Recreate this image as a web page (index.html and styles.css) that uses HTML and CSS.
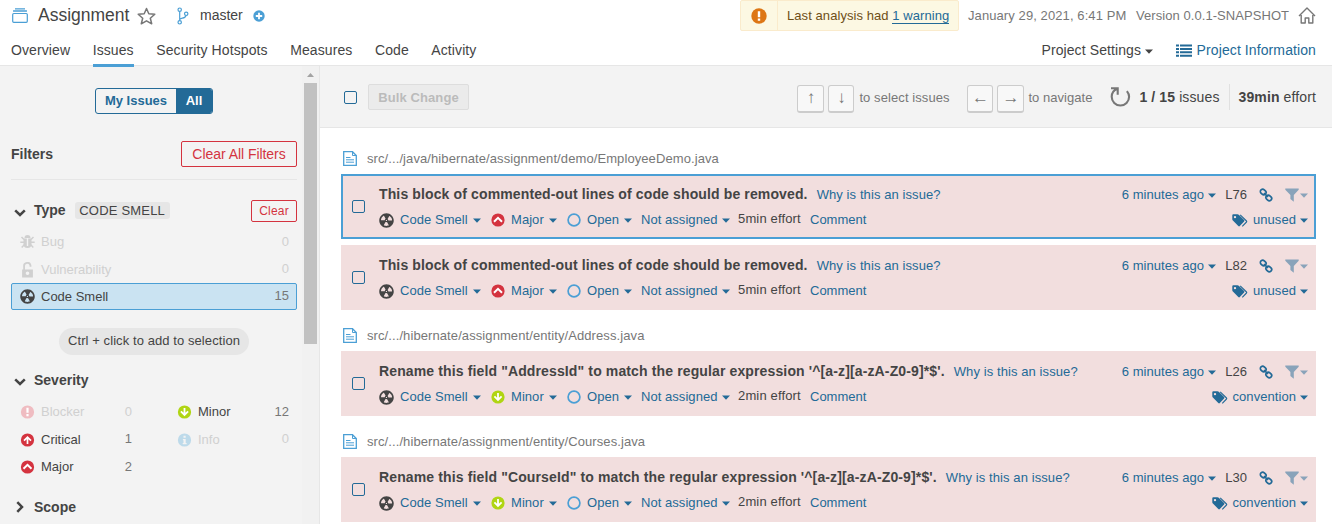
FILE: index.html
```html
<!DOCTYPE html>
<html lang="en">
<head>
<meta charset="utf-8">
<title>Issues - Assignment</title>
<link rel="stylesheet" href="styles.css">
</head>
<body>
<svg class="defs" width="0" height="0">
  <symbol id="smell" viewBox="1.8 1.8 12.4 12.4"><path d="M8 2C4.7 2 2 4.7 2 8s2.7 6 6 6 6-2.7 6-6-2.7-6-6-6zm-.5 5.5h.9v.9h-.9v-.9zm-3.8.2c-.1 0-.2-.1-.2-.2 0-.4.1-1.2.6-2S5.3 4.200 5.600 4c.2 0 .3 0 .3.1l1.300 2.300c0 .1 0 .2-.1.2-.1.2-.2.3-.3.5-.1.2-.2.4-.2.5 0 .1-.1.2-.2.2l-2.700-.1zM9.900 12c-.3.2-1.100.5-2 .5-.9 0-1.700-.3-2-.5-.1 0-.1-.2-.1-.3l1.300-2.300c0-.1.1-.1.2-.1.2.1.3.1.5.1s.4 0 .5-.1c.1 0 .2 0 .2.1l1.300 2.300c.2.2.2.3.1.3zm2.500-4.100L9.700 8c-.1 0-.2-.1-.2-.2 0-.2-.1-.4-.2-.5 0-.1-.2-.3-.3-.4-.1 0-.1-.1-.1-.2l1.300-2.300c.1-.1.2-.1.3-.1.3.2 1 .7 1.500 1.500s.6 1.600.6 2c0 0-.1.1-.2.1z"/></symbol>
  <symbol id="bug" viewBox="0 0 15 15"><path fill="currentColor" d="M4.500 4a3 3 0 0 1 6 0zM3.500 4.500h3.300V12h1.400V4.500h3.300v5.500a4 4 0 0 1-8 0z"/><path fill="none" stroke="currentColor" stroke-width="1.500" d="M4 5.500 1.500 3M11 5.500 13.500 3M4 8.300H.3M11 8.300h3.700M4.500 10.500l-2.800 3M10.500 10.500l2.800 3"/></symbol>
  <symbol id="lock" viewBox="0 0 12 16"><path fill="none" stroke="currentColor" stroke-width="1.800" d="M2.600 8V4.500a3.200 3.200 0 0 1 6.400-.8v1"/><path fill="currentColor" fill-rule="evenodd" d="M.6 7.500h10.800v8H.6zM6 9.500a1.800 1.800 0 1 0 0 3.600 1.800 1.800 0 0 0 0-3.600z"/></symbol>
  <symbol id="blocker" viewBox="0 0 14 14"><circle cx="7" cy="7" r="6.600" fill="currentColor"/><path stroke="#fff" stroke-width="2.200" d="M7 2.800v4.900M7 9v2.200"/></symbol>
  <symbol id="critical" viewBox="0 0 14 14"><circle cx="7" cy="7" r="6.600" fill="#d4333f"/><path fill="none" stroke="#fff" stroke-width="1.700" d="M7 11V4M3.500 7.600 7 4.100l3.500 3.500"/></symbol>
  <symbol id="major" viewBox="0 0 14 14"><circle cx="7" cy="7" r="6.600" fill="#d4333f"/><path fill="none" stroke="#fff" stroke-width="2" d="M3 8.800 7 4.900l4 3.900"/></symbol>
  <symbol id="minor" viewBox="0 0 14 14"><circle cx="7" cy="7" r="6.600" fill="#b0d513"/><path fill="none" stroke="#fff" stroke-width="1.800" d="M7 3v7M3.400 6.400 7 10l3.600-3.600"/></symbol>
  <symbol id="info" viewBox="0 0 14 14"><circle cx="7" cy="7" r="6.600" fill="currentColor"/><path fill="#f3f3f3" d="M6 2.800h2.200v2H6zM5.400 6h2.800v4h.9v1.300H5.200V10H6V7.200h-.6z"/></symbol>
  <symbol id="open" viewBox="0 0 14 14"><circle cx="7" cy="7" r="5.900" fill="none" stroke="#4b9fd5" stroke-width="1.700"/></symbol>
  <symbol id="caret" viewBox="0 0 8 5"><path fill="currentColor" d="M0 .5h8L4 4.700z"/></symbol>
  <symbol id="chevron" viewBox="0 0 12 8"><path fill="none" stroke="#444" stroke-width="2.500" d="M1.200 1.300 6 6l4.800-4.700"/></symbol>
  <symbol id="file" viewBox="0 0 14 15"><path fill="#fff" stroke="#4b9fd5" stroke-width="1.300" d="M.7.7h8.800l3.800 3.800v9.800H.7z"/><path fill="none" stroke="#4b9fd5" d="M9.500.7v3.800h3.800M3 6.500h4.500M3 8.800h8M3 11.200h8"/></symbol>
  <symbol id="link" viewBox="0 0 14 14"><g fill="none" stroke="currentColor" stroke-width="1.700"><rect x="1.200" y="1.700" width="6" height="4.600" rx="2.200" transform="rotate(45 4.200 4)"/><rect x="6.800" y="7.700" width="6" height="4.600" rx="2.200" transform="rotate(45 9.800 10)"/><path d="M5 5l4 4"/></g></symbol>
  <symbol id="filter" viewBox="0 0 14 14"><path fill="currentColor" d="M.3.500h13.400v1.200L8.800 7v6.700L5.400 11V7L.3 1.700z"/></symbol>
  <symbol id="tags" viewBox="0 0 16 13"><path fill="currentColor" fill-rule="evenodd" d="M.3 1.300a1 1 0 0 1 1-1h4.200c.6 0 1 .2 1.500.6l5.100 5.100c.5.5.5 1 0 1.500l-4.300 4.500c-.4.500-1 .5-1.500 0L.9 6.600C.5 6.200.3 5.700.3 5.200zM3 1.900a1.200 1.200 0 1 0 0 2.400 1.200 1.200 0 0 0 0-2.400z"/><path fill="none" stroke="currentColor" stroke-width="1.100" d="M8.200.8 14.500 7q.5.5 0 1l-4.200 4.400"/></symbol>
</svg>

<header class="header">
  <div class="header-top">
    <svg class="project-icon" width="16" height="15" viewBox="0 0 16 15"><g fill="none" stroke="#4b9fd5"><path d="M3 .8h10M1.700 3.800V3h12.600v.8" stroke-width="1.300"/><rect x=".7" y="5.500" width="14.600" height="8.800" rx="1" stroke-width="1.200"/></g></svg>
    <span class="project">Assignment</span>
    <svg class="star" width="19" height="18" viewBox="0 0 19 18"><path fill="none" stroke="#777" stroke-width="1.500" stroke-linejoin="round" d="M9.500 1.500l2.300 5.300 6 .5-4.500 3.900 1.400 5.600-5.200-3-5.200 3 1.400-5.600L1.200 7.300l6-.5z"/></svg>
    <svg class="branch" width="12" height="18" viewBox="0 0 12 18"><g fill="none" stroke="#4b9fd5" stroke-width="1.200"><circle cx="2.700" cy="2.700" r="1.700"/><circle cx="2.700" cy="15.300" r="1.700"/><circle cx="9.200" cy="6.800" r="1.700"/><path d="M2.700 4.400v9.200M2.700 12.500c1-2 5.500-.5 6.300-4"/></g></svg>
    <span class="branch-name">master</span>
    <svg class="plus" width="12" height="12" viewBox="0 0 12 12"><circle cx="6" cy="6" r="5.700" fill="#4b9fd5"/><path stroke="#fff" stroke-width="1.800" d="M6 2.800v6.400M2.800 6h6.400"/></svg>
    <div class="warning">
      <div class="warning-icon"><svg width="16" height="16" viewBox="0 0 16 16"><circle cx="8" cy="8" r="7.700" fill="#dd7615"/><path stroke="#fff" stroke-width="2.400" d="M8 3.300v6M8 10.600v2.200"/></svg></div>
      <div class="warning-text">Last analysis had <a class="warning-link">1 warning</a></div>
    </div>
    <span class="date">January 29, 2021, 6:41 PM</span>
    <span class="version">Version 0.0.1-SNAPSHOT</span>
    <svg class="home" width="18" height="17" viewBox="0 0 18 17"><path fill="none" stroke="#777" stroke-width="1.400" stroke-linejoin="round" d="M1 9l8-8 8 8M3.200 8v8h4v-5h3.600v5h4V8"/></svg>
  </div>
  <nav class="tabs">
    <a class="tab">Overview</a><a class="tab active">Issues</a><a class="tab">Security Hotspots</a><a class="tab">Measures</a><a class="tab">Code</a><a class="tab">Activity</a>
    <a class="tab settings">Project Settings <svg class="settings-caret" width="8" height="5"><use href="#caret"/></svg></a>
    <a class="tab project-info"><svg width="16" height="13" viewBox="0 0 16 13"><path stroke="#236a97" stroke-width="2" d="M0 1.500h3M4 1.500h12M0 4.900h3M4 4.900h12M0 8.300h3M4 8.300h12M0 11.700h3M4 11.700h12"/></svg>Project Information</a>
  </nav>
</header>

<div class="page">
  <aside class="sidebar">
    <div class="facets">
      <div class="toggle"><span class="toggle-item">My Issues</span><span class="toggle-item selected">All</span></div>
      <div class="filters-head"><b>Filters</b><button class="clear-all">Clear All Filters</button></div>
      <div class="facet-head type-head"><svg class="chev" width="12" height="8"><use href="#chevron"/></svg><b>Type</b><span class="tag">CODE SMELL</span><button class="clear">Clear</button></div>
      <div class="facet disabled"><svg width="15" height="15"><use href="#bug"/></svg><span>Bug</span><span class="count">0</span></div>
      <div class="facet disabled second"><svg width="15" height="16"><use href="#lock"/></svg><span>Vulnerability</span><span class="count raised">0</span></div>
      <div class="facet chosen"><svg width="15" height="15" fill="#444"><use href="#smell"/></svg><span>Code Smell</span><span class="count raised">15</span></div>
      <div class="hint">Ctrl + click to add to selection</div>
      <div class="facet-head severity-head"><svg class="chev" width="12" height="8"><use href="#chevron"/></svg><b>Severity</b></div>
      <div class="severities">
        <div class="facet disabled"><svg class="pink" width="14" height="14"><use href="#blocker"/></svg><span>Blocker</span><span class="count">0</span></div>
        <div class="facet"><svg width="14" height="14"><use href="#minor"/></svg><span>Minor</span><span class="count">12</span></div>
        <div class="facet"><svg width="14" height="14"><use href="#critical"/></svg><span>Critical</span><span class="count raised">1</span></div>
        <div class="facet disabled"><svg class="pale" width="14" height="14"><use href="#info"/></svg><span>Info</span><span class="count raised">0</span></div>
        <div class="facet"><svg width="14" height="14"><use href="#major"/></svg><span>Major</span><span class="count">2</span></div>
      </div>
      <div class="facet-head scope-head"><svg class="chev closed" width="12" height="8"><use href="#chevron"/></svg><b>Scope</b></div>
    </div>
    <div class="scrollbar"><svg width="7" height="4" viewBox="0 0 7 4"><path fill="#a3a3a3" d="M0 4 3.500 0 7 4z"/></svg><div class="thumb"></div></div>
  </aside>

  <main class="main">
    <div class="toolbar">
      <span class="checkbox"></span><button class="bulk">Bulk Change</button>
      <span class="key up">↑</span><span class="key down">↓</span><span class="note select-note">to select issues</span>
      <span class="key left">←</span><span class="key right">→</span><span class="note navigate-note">to navigate</span>
      <svg class="reload" width="21" height="20" viewBox="0 0 21 20"><path fill="none" stroke="#777" stroke-width="2.100" d="M1 1.200h6.700v6.500M7.200 1.700C4 3 1.700 6 1.700 9.800a8.700 8.700 0 0 0 17.400 0c0-2-.8-4-2.200-5.700"/></svg>
      <span class="total"><b>1 / 15</b> issues</span><span class="effort-total"><b>39min</b> effort</span>
    </div>
    <div class="list" id="list"></div>
  </main>
</div>
<script src="issues.js"></script>
</body>
</html>
```
FILE: styles.css
```css
* { box-sizing: border-box; }
body { margin: 0; height: 524px; overflow: hidden; background: #fff; color: #444; font: 13px/16px "Liberation Sans", Arial, sans-serif; display: flex; flex-direction: column; }
svg { display: block; flex: none; }
button { font: inherit; padding: 0; }
.defs { display: none; }
span, a, b { white-space: nowrap; }

.header { height: 66px; flex: none; border-bottom: 1px solid #e6e6e6; position: relative; z-index: 1; }
.header-top { height: 31px; display: flex; align-items: center; padding: 0 16px 0 12px; }
.project { font-size: 17.500px; line-height: 20px; margin-left: 10px; width: 91px; position: relative; top: -1px; }
.star { margin-left: 8px; }
.branch { margin-left: 21px; }
.branch-name { font-size: 14px; margin-left: 11px; width: 43px; position: relative; top: -1px; }
.plus { margin-left: 10px; }
.warning { margin-left: auto; width: 219px; height: 31px; flex: none; display: flex; background: #fcf8e3; border: 1px solid #faebcc; border-radius: 2px; color: #6f4f17; }
.warning-icon { width: 37px; border-right: 1px solid #faebcc; display: flex; align-items: center; justify-content: center; }
.warning-text { padding: 7px 0 0 9px; letter-spacing: .07px; white-space: nowrap; }
.warning-link { color: #236a97; border-bottom: 1px solid #236a97; }
.date, .version { color: #777; width: 158px; margin-left: 9px; }
.date { letter-spacing: .09px; }
.version { width: 154px; margin-left: 10px; letter-spacing: .06px; }
.home { margin-left: 8px; }
.tabs { height: 36px; display: flex; padding: 0 16px 0 11px; font-size: 14px; letter-spacing: .1px; }
.tab { height: 36px; padding-top: 11px; margin-right: 22.500px; border-bottom: 3px solid transparent; }
.tab.active { border-color: #4b9fd5; }
.settings { margin-left: auto; display: flex; gap: 4px; }
.settings-caret { margin-top: 7px; }
.project-info { display: flex; gap: 5px; margin-right: 0; color: #236a97; }
.project-info svg { margin-top: 2px; }

.page { flex: 1; display: flex; min-height: 0; }
.sidebar { width: 320px; flex: none; display: flex; background: #f3f3f3; border-right: 1px solid #e6e6e6; overflow: hidden; }
.facets { width: 302px; padding: 22px 5px 0 11px; flex: none; }
.scrollbar { width: 17px; background: #f1f1f1; display: flex; flex-direction: column; align-items: center; padding-top: 7px; }
.thumb { width: 13px; height: 261px; margin-top: 6px; background: #c1c1c1; flex: none; }
.toggle { display: flex; width: 118px; height: 26px; margin-left: 84px; border: 1px solid #236a97; border-radius: 3px; color: #236a97; font-weight: bold; line-height: 24px; overflow: hidden; }
.toggle-item { flex: 1; text-align: center; }
.toggle-item.selected { flex: none; width: 36px; background: #236a97; color: #fff; }
.filters-head { height: 66px; padding-top: 27px; border-bottom: 1px solid #e6e6e6; display: flex; justify-content: space-between; }
.filters-head b { font-size: 14px; line-height: 26px; }
.clear-all, .clear { color: #d4333f; background: transparent; border: 1px solid #d4333f; border-radius: 2px; width: 116px; height: 26px; font-size: 14px; letter-spacing: -.05px; }
.clear { width: 46px; height: 22px; font-size: 12px; margin-left: auto; letter-spacing: .2px; }
.facet-head { display: flex; align-items: center; height: 22px; padding-left: 3px; }
.facet-head b { font-size: 14px; margin-left: 8px; }
.type-head { margin-top: 20px; }
.type-head b { position: relative; top: -1px; }
.chev { margin-top: 3px; }
.closed { transform: rotate(-90deg); margin-top: 0; }
.tag { background: #e6e6e6; border-radius: 3px; height: 17px; width: 95px; text-align: center; margin: -1px 0 0 9px; line-height: 17px; letter-spacing: .2px; }
.facet { height: 27px; display: flex; align-items: center; padding: 0 8px 0 9px; border: 1px solid transparent; border-width: 1px 0; border-radius: 2px; }
.type-head + .facet { margin-top: 6px; }
.facet svg { width: 15px; margin-right: 6px; }
.facet.second { height: 28px; padding-top: 1px; }
.count { margin-left: auto; color: #777; }
.raised { margin-bottom: 2px; }
.disabled, .disabled .count { color: #d0d0d0; }
.pink { color: #efbcc1; }
.pale { color: #bddaea; }
.chosen { background: #cae3f2; border: 1px solid #4b9fd5; padding: 0 7px 0 8px; }
.hint { width: 190px; height: 27px; margin: 18px 0 0 48px; border-radius: 14px; background: #e6e6e6; line-height: 26px; text-align: center; letter-spacing: .08px; }
.severity-head { margin-top: 14px; }
.severities { display: grid; grid-template-columns: 121px 129px; grid-auto-rows: 27.500px; column-gap: 36px; margin: 7px 0 15px; }
.severities .facet { height: 28px; padding-right: 0; }
.severities .facet:nth-child(even) { margin-right: 8px; }

.main { flex: 1; min-width: 0; }
.toolbar { height: 62px; background: #f3f3f3; border-bottom: 1px solid #e6e6e6; display: flex; align-items: center; padding: 1px 16px 0 24px; color: #777; }
.checkbox { width: 13px; height: 13px; flex: none; border: 1px solid #236a97; border-radius: 2px; }
.bulk { margin-left: 11px; width: 101px; height: 26px; border: 1px solid #ddd; border-radius: 2px; background: #ebebeb; color: #bbb; font-weight: bold; letter-spacing: .1px; padding-top: 1px; }
.key { width: 27px; height: 28px; margin-top: 3px; border: 1px solid #ccc; border-bottom-width: 2px; border-radius: 3px; background: #f8f8f8; text-align: center; line-height: 24px; font-size: 17px; }
.up { margin-left: auto; }
.down, .left { width: 26px; }
.down { margin-left: 4px; }
.note { margin-top: 1px; }
.select-note { margin-left: 5px; width: 108px; letter-spacing: .09px; }
.right { margin-left: 4px; }
.navigate-note { margin-left: 4px; width: 82px; letter-spacing: .05px; }
.total, .effort-total { color: #444; font-size: 14px; letter-spacing: .12px; }
.total { margin-left: 8px; padding-right: 9px; height: 26px; line-height: 26px; border-right: 1px solid #e0e0e0; }
.effort-total { margin-left: 9px; }

.list { padding: 5px 16px 0 21px; }
.file { height: 41px; display: flex; align-items: center; padding: 10px 0 0 2px; gap: 10px; color: #777; }
.file span { letter-spacing: .09px; }
.issue { height: 65px; background: #f2dede; display: grid; grid-template-columns: 38px 1fr auto; border: 2px solid transparent; }
.issue + .issue { margin-top: 6px; }
.issue.current { border-color: #4b9fd5; }
.issue .checkbox { margin: 24px 0 0 9px; }
.issue-body { padding-top: 11px; margin-left: -2px; }
.issue-body, .issue-side { color: #236a97; }
.title-row { display: flex; height: 25px; }
.title { color: #444; font-size: 14px; letter-spacing: .13px; margin-right: 9px; position: relative; top: -1px; }
.why { letter-spacing: .09px; }
.meta { display: grid; grid-template-columns: 112px 76px 74px 97px 72px auto; width: max-content; height: 16px; }
.item { display: flex; align-items: center; letter-spacing: .05px; }
.item .icon { margin-right: 6px; }
.item .caret { margin-left: 5px; }
.effort { color: #444; position: relative; top: -1px; letter-spacing: .15px; }
.issue-side { padding: 11px 6px 0 0; display: flex; flex-direction: column; align-items: flex-end; }
.side-row { display: flex; align-items: center; height: 16px; margin-bottom: 9px; letter-spacing: .06px; }
.side-row .caret { margin-left: 4px; }
.line { color: #444; margin: 0 12px 0 9px; }
.filter { margin-left: 12px; opacity: .5; display: flex; align-items: center; }
.filter .caret { margin-left: 1px; }
.tags { margin-right: 5px; }
```
FILE: issues.js
```javascript
const icon = (id, w, h, cls = 'icon') => `<svg class="${cls}" width="${w}" height="${h}"><use href="#${id}"/></svg>`;
const caret = icon('caret', 8, 5, 'caret');

const files = [
  { path: 'src/.../java/hibernate/assignment/demo/EmployeeDemo.java', issues: [
    { title: 'This block of commented-out lines of code should be removed.', severity: 'Major', effort: '5min', line: 'L76', tag: 'unused', current: true },
    { title: 'This block of commented-out lines of code should be removed.', severity: 'Major', effort: '5min', line: 'L82', tag: 'unused' }
  ] },
  { path: 'src/.../hibernate/assignment/entity/Address.java', issues: [
    { title: 'Rename this field "AddressId" to match the regular expression \'^[a-z][a-zA-Z0-9]*$\'.', severity: 'Minor', effort: '2min', line: 'L26', tag: 'convention' }
  ] },
  { path: 'src/.../hibernate/assignment/entity/Courses.java', issues: [
    { title: 'Rename this field "CourseId" to match the regular expression \'^[a-z][a-zA-Z0-9]*$\'.', severity: 'Minor', effort: '2min', line: 'L30', tag: 'convention' }
  ] }
];

const issue = i => `<article class="issue${i.current ? ' current' : ''}">
  <span class="checkbox"></span>
  <div class="issue-body">
    <div class="title-row"><b class="title">${i.title}</b><a class="why">Why is this an issue?</a></div>
    <div class="meta">
      <span class="item"><svg class="icon" width="15" height="15" fill="#444"><use href="#smell"/></svg>Code Smell${caret}</span>
      <span class="item">${icon(i.severity.toLowerCase(), 14, 14)}${i.severity}${caret}</span>
      <span class="item">${icon('open', 14, 14)}Open${caret}</span>
      <span class="item">Not assigned${caret}</span>
      <span class="effort">${i.effort} effort</span>
      <span>Comment</span>
    </div>
  </div>
  <div class="issue-side">
    <div class="side-row"><span>6 minutes ago</span>${caret}<span class="line">${i.line}</span>${icon('link', 14, 14)}<span class="filter">${icon('filter', 14, 14)}${caret}</span></div>
    <div class="side-row">${icon('tags', 16, 13, 'tags')}<span>${i.tag}</span>${caret}</div>
  </div>
</article>`;

document.getElementById('list').innerHTML = files.map(f =>
  `<div class="file">${icon('file', 14, 15)}<span>${f.path}</span></div>` + f.issues.map(issue).join('')
).join('');
```
